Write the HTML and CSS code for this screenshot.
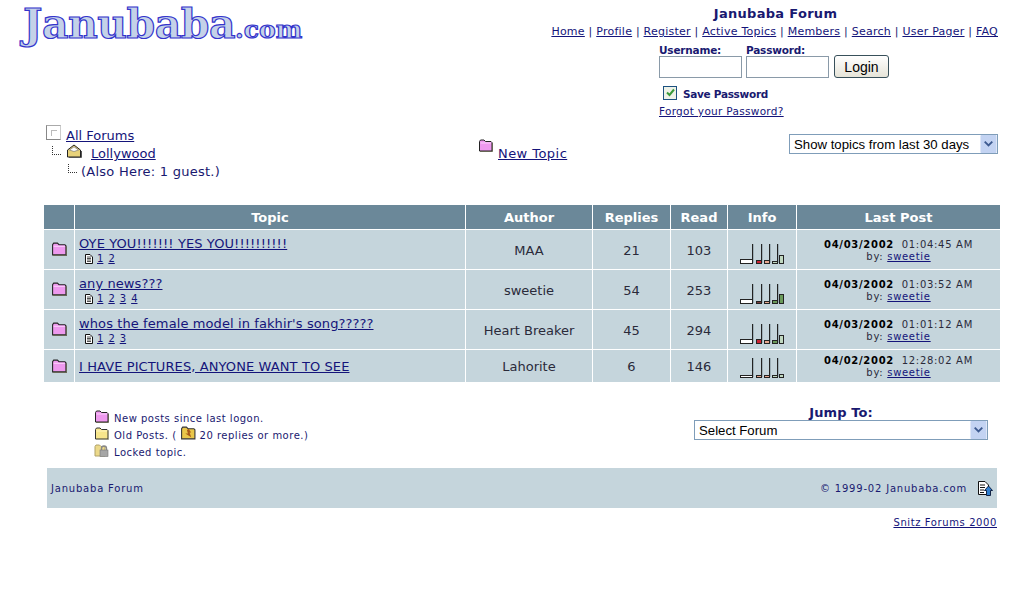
FILE: index.html
```html
<!DOCTYPE html>
<html>
<head>
  <meta charset="UTF-8">
  <title>Janubaba Forum</title>
  <link rel="stylesheet" href="styles.css">
</head>
<body>
<svg class="defs" width="0" height="0">
  <symbol id="folder-new" viewBox="0 0 15 13">
    <path d="M1.500 12V2.500L2.500 1H6L7.500 2.500H13L14 3.500V12Z" fill="#ee99ee" stroke="#222"/>
    <path d="M2.500 4H13" stroke="#fbd0fb"/>
    <path d="M14.500 4V12.500H2" stroke="#665" fill="none"/>
  </symbol>
  <symbol id="folder-old" viewBox="0 0 15 13">
    <path d="M1.500 12V2.500L2.500 1H6L7.500 2.500H13L14 3.500V12Z" fill="#f7e68c" stroke="#333"/>
    <path d="M2.500 4H13" stroke="#fff6c0"/>
    <path d="M14.500 4V12.500H2" stroke="#998" fill="none"/>
  </symbol>
  <symbol id="folder-hot" viewBox="0 0 15 13">
    <path d="M1.500 12V2.500L2.500 1H6L7.500 2.500H13L14 3.500V12Z" fill="#e9c74a" stroke="#333"/>
    <path d="M8 2.500L10.500 6L9 6L10.500 10.500L5 7H7.500L6.500 4Z" fill="#a8591a"/>
  </symbol>
  <symbol id="folder-lock" viewBox="0 0 15 13">
    <path d="M1 12V2.500L2 1H5.500L7 2.500H11V12Z" fill="#ecd98a" stroke="#b0a268"/>
    <path d="M7.500 6V4.500A2.500 2.500 0 0 1 12.500 4.500V6" fill="none" stroke="#888" stroke-width="1.400"/>
    <rect x="6" y="6" width="8" height="6.500" fill="#a6a6a6" stroke="#777" stroke-width="0.600"/>
  </symbol>
  <symbol id="folder-home" viewBox="0 0 16 14">
    <path d="M1.500 13V6L8 1L14.500 6V13Z" fill="#e8d27a" stroke="#222"/>
    <path d="M3.500 6L8 2.800L12.500 6L8 7.500Z" fill="#fff" stroke="#666" stroke-width="0.600"/>
    <path d="M15.500 7V13.500H3" stroke="#555" fill="none"/>
  </symbol>
  <symbol id="page" viewBox="0 0 9 10">
    <path d="M1.500 0.500H6L8.500 3V9.500H1.500Z" fill="#fff" stroke="#111"/>
    <path d="M3 3H7M3 4.500H7M3 6H7M3 7.500H7" stroke="#555" stroke-width="1.100"/>
  </symbol>
  <symbol id="stems" viewBox="0 0 44 21">
    <path d="M13.500 1V20M22.500 1V20M30.500 1V20M38.500 1V20" stroke="#9fb0b8" fill="none"/>
    <path d="M12.500 1V20M21.500 1V20M29.500 1V20M37.500 1V20" stroke="#222" fill="none"/>
  </symbol>
  <symbol id="to-top" viewBox="0 0 16 16">
    <path d="M1.500 1.500H8L11.500 5V14.500H1.500Z" fill="#fff" stroke="#111"/>
    <path d="M3 5H8M3 7.500H8M3 10H7M3 12.500H7" stroke="#111"/>
    <path d="M11.500 6L15.500 10.500H13.500V15.500H9.500V10.500H7.500Z" fill="#2f7fd0" stroke="#124"/>
  </symbol>
  <symbol id="drop" viewBox="0 0 17 19">
    <rect x="0" y="0" width="17" height="19" rx="1" fill="#c3d3f2"/>
    <path d="M4.500 7L8.500 11L12.500 7" fill="none" stroke="#3d5a90" stroke-width="2"/>
  </symbol>
</svg>

<header class="top">
  <div class="logo">Janubaba<span class="logo-small">.com</span></div>
  <div class="top-right">
    <div class="forum-title">Janubaba Forum</div>
    <nav class="nav">
      <a href="#">Home</a> | <a href="#">Profile</a> | <a href="#">Register</a> | <a href="#">Active Topics</a> | <a href="#">Members</a> | <a href="#">Search</a> | <a href="#">User Pager</a> | <a href="#">FAQ</a>
    </nav>
    <form class="login">
      <div class="login-fields">
        <label class="field"><b>Username:</b><input type="text" class="box"></label>
        <label class="field"><b>Password:</b><input type="password" class="box"></label>
        <button type="button" class="login-btn">Login</button>
      </div>
      <label class="save"><span class="check"><svg width="9" height="9" viewBox="0 0 9 9"><path d="M1 4.500L3.500 7L8 1.500" fill="none" stroke="#3a9a3a" stroke-width="2"/></svg></span><b>Save Password</b></label>
      <a href="#" class="forgot">Forgot your Password?</a>
    </form>
  </div>
</header>

<section class="crumbs">
  <div class="tree">
    <div class="tree-row"><span class="root-box"><span class="root-inner"></span></span><a href="#">All Forums</a></div>
    <div class="tree-row level-1"><span class="elbow"></span><svg class="ico-home" width="16" height="14"><use href="#folder-home"/></svg><a href="#" class="forum-link">Lollywood</a></div>
    <div class="tree-row level-2"><span class="elbow"></span><span class="also">(Also Here: 1 guest.)</span></div>
  </div>
  <div class="new-topic"><svg width="15" height="13"><use href="#folder-new"/></svg><a href="#">New Topic</a></div>
  <div class="select-wrap days-wrap">
    <select class="pick"><option>Show topics from last 30 days</option></select>
    <svg class="drop" width="17" height="18"><use href="#drop"/></svg>
  </div>
</section>

<table class="topics">
  <colgroup><col class="c-icon"><col class="c-topic"><col class="c-author"><col class="c-replies"><col class="c-read"><col class="c-info"><col class="c-last"></colgroup>
  <thead>
    <tr><th></th><th>Topic</th><th>Author</th><th>Replies</th><th>Read</th><th>Info</th><th>Last Post</th></tr>
  </thead>
  <tbody>
    <tr>
      <td class="center"><svg class="folder" width="16" height="14"><use href="#folder-new"/></svg></td>
      <td><a href="#" class="subject">OYE YOU!!!!!!! YES YOU!!!!!!!!!!</a>
        <div class="pages"><svg width="9" height="10"><use href="#page"/></svg><a href="#">1</a><a href="#">2</a></div></td>
      <td class="center">MAA</td><td class="center">21</td><td class="center">103</td>
      <td class="center">
        <svg class="bars" width="44" height="21">
          <use href="#stems"/>
          <rect class="b-white" x="0.500" y="16.500" width="12" height="4"/>
          <rect class="b-red" x="16.500" y="17.500" width="5" height="3"/>
          <rect class="b-pink" x="24.500" y="17.500" width="5" height="3"/>
          <rect class="b-pale" x="32.500" y="18.500" width="5" height="2"/>
          <rect class="b-pale" x="39.500" y="12.500" width="4" height="8"/>
        </svg>
      </td>
      <td class="last"><b>04/03/2002</b>&nbsp; 01:04:45 AM<br>by: <a href="#">sweetie</a></td>
    </tr>
    <tr>
      <td class="center"><svg class="folder" width="16" height="14"><use href="#folder-new"/></svg></td>
      <td><a href="#" class="subject">any news???</a>
        <div class="pages"><svg width="9" height="10"><use href="#page"/></svg><a href="#">1</a><a href="#">2</a><a href="#">3</a><a href="#">4</a></div></td>
      <td class="center">sweetie</td><td class="center">54</td><td class="center">253</td>
      <td class="center">
        <svg class="bars" width="44" height="21">
          <use href="#stems"/>
          <rect class="b-white" x="0.500" y="16.500" width="12" height="4"/>
          <rect class="b-dark" x="16.500" y="18.500" width="5" height="2"/>
          <rect class="b-pink" x="24.500" y="18.500" width="5" height="2"/>
          <rect class="b-green" x="32.500" y="17.500" width="5" height="3"/>
          <rect class="b-green" x="39.500" y="11.500" width="4" height="9"/>
        </svg>
      </td>
      <td class="last"><b>04/03/2002</b>&nbsp; 01:03:52 AM<br>by: <a href="#">sweetie</a></td>
    </tr>
    <tr>
      <td class="center"><svg class="folder" width="16" height="14"><use href="#folder-new"/></svg></td>
      <td><a href="#" class="subject">whos the female model in fakhir's song?????</a>
        <div class="pages"><svg width="9" height="10"><use href="#page"/></svg><a href="#">1</a><a href="#">2</a><a href="#">3</a></div></td>
      <td class="center">Heart Breaker</td><td class="center">45</td><td class="center">294</td>
      <td class="center">
        <svg class="bars" width="44" height="21">
          <use href="#stems"/>
          <rect class="b-white" x="0.500" y="16.500" width="12" height="4"/>
          <rect class="b-red" x="16.500" y="16.500" width="5" height="4"/>
          <rect class="b-pink" x="24.500" y="17.500" width="5" height="3"/>
          <rect class="b-green" x="32.500" y="17.500" width="5" height="3"/>
          <rect class="b-pale" x="39.500" y="12.500" width="4" height="8"/>
        </svg>
      </td>
      <td class="last"><b>04/03/2002</b>&nbsp; 01:01:12 AM<br>by: <a href="#">sweetie</a></td>
    </tr>
    <tr class="short">
      <td class="center"><svg class="folder" width="16" height="14"><use href="#folder-new"/></svg></td>
      <td><a href="#" class="subject">I HAVE PICTURES, ANYONE WANT TO SEE</a></td>
      <td class="center">Lahorite</td><td class="center">6</td><td class="center">146</td>
      <td class="center">
        <svg class="bars" width="44" height="21">
          <use href="#stems"/>
          <rect class="b-white" x="0.500" y="18.500" width="12" height="2"/>
          <rect class="b-pink" x="16.500" y="18.500" width="5" height="2"/>
          <rect class="b-pink" x="24.500" y="18.500" width="5" height="2"/>
          <rect class="b-pale" x="32.500" y="18.500" width="5" height="2"/>
          <rect class="b-pale" x="39.500" y="17.500" width="4" height="3"/>
        </svg>
      </td>
      <td class="last"><b>04/02/2002</b>&nbsp; 12:28:02 AM<br>by: <a href="#">sweetie</a></td>
    </tr>
  </tbody>
</table>

<section class="below">
  <ul class="legend">
    <li><svg width="15" height="13"><use href="#folder-new"/></svg>New posts since last logon.</li>
    <li><svg width="15" height="13"><use href="#folder-old"/></svg>Old Posts. (<svg class="hot" width="16" height="14"><use href="#folder-hot"/></svg>20 replies or more.)</li>
    <li><svg width="15" height="13"><use href="#folder-lock"/></svg>Locked topic.</li>
  </ul>
  <div class="jump">
    <div class="jump-label">Jump To:</div>
    <div class="select-wrap jump-wrap">
      <select class="pick"><option>Select Forum</option></select>
      <svg class="drop" width="17" height="18"><use href="#drop"/></svg>
    </div>
  </div>
</section>

<footer class="band">
  <span>Janubaba Forum</span>
  <span class="band-right">© 1999-02 Janubaba.com<svg width="16" height="16"><use href="#to-top"/></svg></span>
</footer>
<div class="snitz"><a href="#">Snitz Forums 2000</a></div>
</body>
</html>
```

FILE: styles.css
```css
body {
  margin: 0;
  background: #fff;
  color: #191970;
  font-family: "DejaVu Sans", Verdana, sans-serif;
  font-size: 13px;
}

a {
  color: #14147a;
}

.defs {
  display: block;
  height: 0;
}

.top {
  display: flex;
  justify-content: space-between;
  height: 125px;
  padding: 3px 17px 0 23px;
  box-sizing: border-box;
}

.logo {
  font-family: "DejaVu Serif", serif;
  font-weight: bold;
  font-size: 41px;
  line-height: 42px;
  letter-spacing: -0.5px;
  color: #c4d2e8;
  -webkit-text-stroke: 1.2px #3434cc;
}

.logo-small {
  font-size: 25px;
  letter-spacing: 0;
}

.top-right {
  width: 448px;
  padding-top: 2px;
  font-size: 11px;
}

.forum-title {
  text-align: center;
  font-size: 13px;
  font-weight: bold;
  line-height: 18px;
  letter-spacing: 0.3px;
  padding-left: 3px;
}

.nav {
  text-align: right;
  line-height: 18px;
  white-space: nowrap;
  letter-spacing: 0.24px;
}

.login {
  padding-left: 109px;
  margin-top: 3px;
}

.login-fields {
  display: flex;
  align-items: flex-end;
  gap: 4px;
}

.field {
  display: flex;
  flex-direction: column;
  font-size: 10.5px;
  letter-spacing: -0.2px;
  line-height: 12px;
}

.box {
  width: 83px;
  height: 22px;
  box-sizing: border-box;
  border: 1px solid #8a9aa8;
  background: #fff;
  padding: 0;
  margin: 0;
}

.login-btn {
  width: 55px;
  height: 23px;
  margin: 0 0 0 1px;
  padding: 0;
  border: 1px solid #38505a;
  border-radius: 3px;
  background: linear-gradient(#fff, #e6e4d8);
  color: #000;
  font-family: "Liberation Sans", sans-serif;
  font-size: 14px;
  font-weight: normal;
}

.save {
  display: flex;
  align-items: center;
  margin: 8px 0 0 4px;
  font-size: 10.5px;
  letter-spacing: -0.3px;
  height: 16px;
}

.check {
  display: flex;
  align-items: center;
  justify-content: center;
  width: 12px;
  height: 12px;
  border: 1px solid #1c5180;
  background: #eef2e8;
  margin: -3px 6px 0 0;
}

.forgot {
  display: block;
  margin-top: 3px;
  font-size: 10.5px;
  letter-spacing: 0.3px;
  line-height: 13px;
}

.crumbs {
  display: flex;
  align-items: flex-start;
  height: 79px;
  padding-left: 46px;
  padding-right: 17px;
  box-sizing: border-box;
}

.tree {
  width: 432px;
}

.tree-row {
  display: flex;
  align-items: flex-end;
  height: 18px;
}

.root-box {
  display: flex;
  align-items: center;
  justify-content: center;
  width: 15px;
  height: 15px;
  border: 1px solid #888;
  border-right-color: #ccc;
  border-top-color: #aaa;
  margin: 0 5px 3px 0;
  box-sizing: border-box;
  background: #fff;
}

.root-inner {
  width: 5px;
  height: 5px;
  border-top: 1px solid #bbb;
  border-left: 1px solid #bbb;
}

.level-1 {
  padding-left: 6px;
}

.level-2 {
  padding-left: 22px;
}

.also {
  letter-spacing: 0.25px;
}

.elbow {
  width: 9px;
  height: 9px;
  border-left: 1px dotted #333;
  border-bottom: 1px dotted #333;
  margin: 0 4px 6px 0;
  box-sizing: border-box;
}

.ico-home {
  margin: 0 9px 3px 0;
}

.level-1 .elbow {
  margin-right: 5px;
}

.new-topic {
  display: flex;
  align-items: flex-end;
  gap: 5px;
  height: 23px;
  margin-top: 13px;
  width: 311px;
  letter-spacing: 0.45px;
}

.new-topic svg {
  margin-bottom: 9px;
}

.select-wrap {
  position: relative;
  display: block;
}

.days-wrap {
  width: 209px;
  margin-top: 9px;
}

.jump-wrap {
  width: 294px;
}

.pick {
  display: block;
  width: 100%;
  height: 20px;
  box-sizing: border-box;
  appearance: none;
  padding: 0 0 0 4px;
  font-family: "Liberation Sans", sans-serif;
  font-size: 13.2px;
  color: #000;
  border: 1px solid #7f9db9;
  border-radius: 0;
  background: #fff;
}

.drop {
  position: absolute;
  right: 1px;
  top: 1px;
  pointer-events: none;
}

.topics {
  margin-left: 43px;
  border-collapse: separate;
  border-spacing: 1px;
  table-layout: fixed;
  width: 958px;
}

.c-icon { width: 30px; }
.c-topic { width: 390px; }
.c-author { width: 126px; }
.c-replies { width: 77px; }
.c-read { width: 56px; }
.c-info { width: 68px; }
.c-last { width: 203px; }

.topics th {
  background: #6b8899;
  color: #fff;
  height: 24px;
  padding: 0;
  font-size: 13px;
}

.topics td {
  background: #c5d5dc;
  color: #2a2a3a;
  height: 39px;
  box-sizing: border-box;
  padding: 2px 0 0 4px;
}

.topics td.center {
  text-align: center;
  padding: 2px 0 0;
}

.topics td.last {
  text-align: center;
  padding: 2px 0 0;
  font-size: 10px;
  line-height: 12px;
  letter-spacing: 0.7px;
}

.topics .short td {
  height: 32px;
  padding-top: 0;
}

.topics .short td.last {
  padding-top: 2px;
}

.last b {
  color: #000;
}

.subject {
  display: inline-block;
  letter-spacing: 0.1px;
}

.folder {
  display: block;
  margin: -4px auto 0;
}

.short .folder {
  margin-top: 0;
}

.pages {
  display: flex;
  align-items: center;
  gap: 5px;
  font-size: 10px;
  line-height: 12px;
  margin: 2px 0 0 5px;
}

.pages svg {
  margin-right: -1px;
}

.bars {
  display: block;
  margin: 6px auto 0;
}

.short .bars {
  margin-top: 3px;
}

.b-white { fill: #fff; stroke: #222; }
.b-red { fill: #cc2233; stroke: #222; }
.b-pink { fill: #e8a890; stroke: #222; }
.b-pale { fill: #c0d8c0; stroke: #222; }
.b-green { fill: #6a9a5a; stroke: #222; }
.b-dark { fill: #7a3a3a; stroke: #222; }

.below {
  display: flex;
  justify-content: space-between;
  height: 85px;
  padding: 22px 27px 0 94px;
  box-sizing: border-box;
}

.legend {
  list-style: none;
  margin: 5px 0 0;
  padding: 0;
  font-size: 10px;
  letter-spacing: 0.5px;
}

.legend li {
  display: flex;
  align-items: center;
  height: 17px;
}

.legend svg {
  margin: -5px 5px 0 0;
}

.legend .hot {
  margin: -5px 4px 0 3px;
}

.jump {
  width: 294px;
  text-align: center;
}

.jump-label {
  font-weight: bold;
  font-size: 13px;
  letter-spacing: 0.1px;
  line-height: 15px;
}

.band {
  display: flex;
  justify-content: space-between;
  align-items: center;
  height: 40px;
  margin: 0 18px 0 47px;
  padding: 0 4px;
  background: #c5d5dc;
  font-size: 10px;
  letter-spacing: 0.8px;
}

.band-right {
  display: flex;
  align-items: center;
  gap: 10px;
}

.snitz {
  text-align: right;
  margin: 8px 18px 0 0;
  font-size: 10px;
  letter-spacing: 0.6px;
  line-height: 14px;
}
```
